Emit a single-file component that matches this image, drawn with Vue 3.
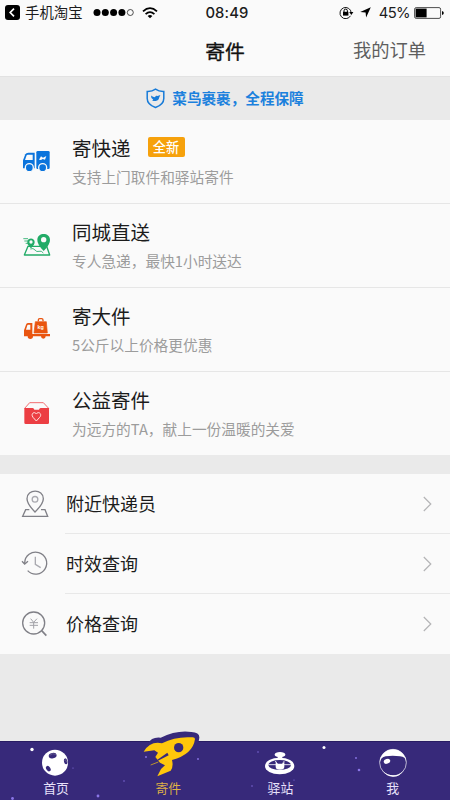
<script setup>
const services = [
  { id: 'truck', title: '寄快递', desc: '支持上门取件和驿站寄件', badge: '全新' },
  { id: 'city', title: '同城直送', desc: '专人急递，最快1小时送达' },
  { id: 'heavy', title: '寄大件', desc: '5公斤以上价格更优惠' },
  { id: 'charity', title: '公益寄件', desc: '为远方的TA，献上一份温暖的关爱' },
]
const tools = [
  { id: 'courier', title: '附近快递员' },
  { id: 'time', title: '时效查询' },
  { id: 'price', title: '价格查询' },
]
const tabs = [
  { id: 'home', label: '首页' },
  { id: 'send', label: '寄件', active: true },
  { id: 'station', label: '驿站' },
  { id: 'me', label: '我' },
]
</script>

<template>
  <div class="screen">
    <header>
      <div class="status">
        <div class="left">
          <svg class="back" width="15" height="15" viewBox="0 0 15 15"><rect width="15" height="15" rx="3" /><path d="M9 3.6 5.2 7.5 9 11.4" fill="none" stroke="#fff" stroke-width="1.7" /></svg>
          <span class="app">手机淘宝</span>
          <svg class="signal" width="42" height="9" viewBox="0 0 42 9"><circle cx="4" cy="4.5" r="3.5" /><circle cx="12.3" cy="4.5" r="3.5" /><circle cx="20.6" cy="4.5" r="3.5" /><circle cx="28.9" cy="4.5" r="3.5" /><circle cx="37.3" cy="4.5" r="3" fill="none" stroke="#222" stroke-width=".8" /></svg>
          <svg class="wifi" width="16" height="12" viewBox="0 0 16 12"><g fill="none" stroke="#000" stroke-width="1.8"><path d="M1 4.3Q8-2 15 4.3" /><path d="M3.6 7.1Q8 3.1 12.4 7.1" /></g><path d="M5.6 8.9Q8 6.9 10.4 8.9L8 11.3Z" /></svg>
        </div>
        <span class="clock">08:49</span>
        <div class="right">
          <svg width="15" height="13" viewBox="0 0 15 13"><path d="M11.5 9.8A5.6 5.6 0 1 1 12.2 6.8" fill="none" stroke="#111" stroke-width="1" /><path d="M10.2 6.1h4.2l-2.1 2.8Z" /><rect x="4" y="5.8" width="5.4" height="3.8" /><path d="M5 6V4.8a1.7 1.7 0 0 1 3.4 0V6" fill="none" stroke="#000" stroke-width="1" /></svg>
          <svg class="loc" width="11" height="11" viewBox="0 0 11 11"><path d="M10.8.2 6.1 10.6 5.6 5.5.2 5.1Z" /></svg>
          <span class="pct">45%</span>
          <svg class="battery" width="30" height="12" viewBox="0 0 30 12"><rect x=".6" y=".6" width="26" height="10.8" rx="1.6" fill="none" stroke="#222" stroke-width=".8" /><rect x="1.6" y="1.6" width="11" height="8.8" /><path d="M28 4q1.8.4 1.8 2T28 8Z" /></svg>
        </div>
      </div>
      <div class="nav"><h1>寄件</h1><a>我的订单</a></div>
    </header>

    <div class="promise">
      <svg width="19" height="21" viewBox="0 0 19 21"><path d="M9.5 1.2Q13 3.7 17.8 3.5V10.5Q17.8 16.5 9.5 19.5 1.2 16.5 1.2 10.5V3.5Q6 3.7 9.5 1.2Z" fill="none" stroke="#187bd8" stroke-width="1.5" /><path d="M5 7.4Q7 9.2 9 9.2 9.8 7.2 11.6 7.9L14.4 7.1 13.2 9.6Q12.6 12.8 9.8 13 8 13.2 6.2 12.4L7.2 11.6Q4.8 10.4 5 7.4Z" fill="#187bd8" /></svg>
      <span>菜鸟裹裹，全程保障</span>
    </div>

    <section class="services">
      <article v-for="s in services" :key="s.id">
        <svg v-if="s.id === 'truck'" class="sicon" viewBox="66 84 90 78">
          <path d="M85 98H104V145H69V121L76 103Q78 98 85 98Z" fill="#0b74dc" /><path d="M83 104H98V120H75L80 106Z" fill="#fafafa" />
          <rect x="109" y="93" width="40" height="54" rx="4" fill="#0b74dc" />
          <g fill="#0b74dc" stroke="#fafafa" stroke-width="4"><circle cx="88" cy="143" r="12" /><circle cx="128" cy="143" r="12" /></g>
          <path d="M117 119l6-10 6 4 10-5-4 11-7-2-5 3Z" fill="#fafafa" />
        </svg>
        <svg v-else-if="s.id === 'city'" class="sicon" viewBox="66 81 90 78">
          <g fill="none" stroke="#22ab67"><path d="M84 124 73 150H149L140 124H82" stroke-width="4" stroke-linejoin="round" /><path d="M91 132q9-4 14 3t12 4 13 5" stroke-width="2.5" /><path d="M70 101H84M73 108H84M77 115H87" stroke-width="2.5" /></g>
          <path d="M131 138Q111 117 112 104C112 81 150 81 150 104Q151 117 131 138Z" fill="#22ab67" /><circle cx="131" cy="104" r="8" fill="#fafafa" />
          <path d="M93 130Q80 118 82 110C83 97 104 97 104 111Q104 119 93 130Z" fill="#22ab67" /><circle cx="93" cy="111" r="5" fill="#fafafa" />
        </svg>
        <svg v-else-if="s.id === 'heavy'" class="sicon" viewBox="66 78 90 78">
          <path d="M84 99H97V132H150V139H137A7 7 0 0 1 123 139H99A8 8 0 0 1 83 139H72V121L78 104Q79 99 84 99Z" fill="#e95510" /><path d="M84 104H91V119H78L82 106Z" fill="#fafafa" />
          <path d="M106 95H139L142 129H102Z" fill="#e95510" stroke="#e95510" stroke-width="2" stroke-linejoin="round" /><path d="M115 94V90Q115 86 119 86H125Q129 86 129 90V94" fill="none" stroke="#e95510" stroke-width="4" />
          <text x="122" y="118" text-anchor="middle">kg</text>
        </svg>
        <svg v-else class="sicon" viewBox="66 90 90 78">
          <path d="M74 115 89 98H130L146 115" fill="none" stroke="#ee5254" stroke-width="2.5" />
          <path d="M73 114H98Q102 114 103 119H117Q118 114 122 114H147V158Q147 162 143 162H77Q73 162 73 158Z" fill="#ec3e43" />
          <path d="M109 153 99 142C91 132 103 122 109 132 115 122 128 132 119 142Z" fill="none" stroke="#ffe5e2" stroke-width="3" stroke-linejoin="round" />
        </svg>
        <div class="copy">
          <h2>{{ s.title }}<em v-if="s.badge">{{ s.badge }}</em></h2>
          <p>{{ s.desc }}</p>
        </div>
      </article>
    </section>

    <section class="tools">
      <div v-for="t in tools" :key="t.id" class="tool">
        <svg class="ticon" viewBox="0 0 84 84" fill="none" stroke="#808087" stroke-width="4">
          <template v-if="t.id === 'courier'"><path d="M42 66Q18 41 18 26C18-4 67-4 67 26Q67 41 42 66Z" /><circle cx="42" cy="28" r="8.5" stroke="#aaaab0" /><path d="M25 59H14L5 79H80L72 59H60" /></template>
          <template v-else-if="t.id === 'time'"><path d="M11 39A33 33 0 1 1 20 62" /><path d="M3 34 11 42 21 34" /><path d="M43 20V43L59 53" stroke="#aaaab0" /></template>
          <template v-else><circle cx="38" cy="39" r="33" /><path d="M62 62 76 77" stroke-width="5" /><path d="M29 26 38 37 48 26M38 37V56M26 38H51M26 46H51" stroke="#a2a2a8" stroke-width="3" /></template>
        </svg>
        <div class="line"><span>{{ t.title }}</span><svg width="9" height="16" viewBox="0 0 9 16" fill="none" stroke="#b4b4b6" stroke-width="1.2"><path d="M.8 1 7.8 8 .8 15" /></svg></div>
      </div>
    </section>

    <footer>
      <svg class="stars" viewBox="0 0 450 59">
        <g fill="#fff"><circle cx="32" cy="8.5" r="1.7" /><circle cx="324" cy="6.5" r="1.5" /></g>
        <g fill="#8b76e8"><circle cx="98" cy="55" r="1.4" /><circle cx="12.5" cy="57.5" r="1.4" /><circle cx="359" cy="29" r="1.3" /><circle cx="356" cy="17" r=".9" /><circle cx="198" cy="18" r=".9" /><circle cx="146" cy="16" r=".9" /><circle cx="124" cy="40" r=".7" /><circle cx="258" cy="11" r=".7" /><circle cx="252" cy="45" r=".7" /><circle cx="73" cy="27" r=".6" /><circle cx="294" cy="39" r=".6" /></g>
      </svg>
      <div v-for="t in tabs" :key="t.id" class="tab" :class="{ active: t.active }">
        <svg v-if="t.id === 'home'" class="gicon" viewBox="120 66 96 96">
          <circle cx="165" cy="113" r="39" fill="#fff" /><g fill="#37297a"><ellipse cx="158" cy="92" rx="12" ry="8" transform="rotate(-12 158 92)" /><ellipse cx="145" cy="131" rx="6" ry="9" transform="rotate(-35 145 131)" /><ellipse cx="197" cy="109" rx="5" ry="9" transform="rotate(-12 197 109)" /></g><path d="M149 91Q157 83 168 88M193 106Q197 100 200 112" fill="none" stroke="#777099" stroke-width="2" />
        </svg>
        <svg v-else-if="t.id === 'send'" class="gicon" viewBox="457 66 96 96">
          <path d="M445 56Q455 35 483 38 530 15 575 21 600 22 599 38 598 66 565 89L525 111V130L505 142 480 100 447 91Z" fill="#37297a" />
          <path d="M586 42Q586 37 579 37 528 33 487 55 452 47 432 80L464 76 475 83 467 96 481 113 496 121 484 132 473 154 513 137Q522 125 517 105 580 88 586 42Z" fill="#ffc70b" />
          <circle cx="537" cy="68" r="14" fill="#37297a" /><path d="M503 83 454 118 507 91Z" fill="#37297a" /><path d="M476 111 453 120" stroke="#ffc70b" stroke-width="2" />
        </svg>
        <svg v-else-if="t.id === 'station'" class="gicon" viewBox="119 66 96 96">
          <ellipse cx="167" cy="89" rx="16" ry="8" fill="#fff" /><path d="M160 95H174V101H160Z" fill="#fff" />
          <ellipse cx="166" cy="123" rx="44" ry="25" fill="#fff" /><ellipse cx="166" cy="120" rx="34" ry="15" fill="#37297a" />
          <path d="M132 119H157M177 119H200M152 108 158 113M180 108 176 113" stroke="#fff" stroke-width="2.5" /><path d="M154 110 161 116H173L180 110V125Q180 134 167 134 154 134 154 125Z" fill="#fff" />
        </svg>
        <svg v-else class="gicon" viewBox="455 66 96 96">
          <circle cx="503" cy="113" r="40" fill="none" stroke="#fff" stroke-width="2" /><path d="M463 113A40 40 0 0 1 543 113Q541 94 524 94 502 91 481 94 466 97 463 113Z" fill="#fff" />
          <path d="M473 138Q486 151 503 151 522 151 534 137 524 155 503 155 482 154 473 138Z" fill="#fff" /><ellipse cx="485" cy="109" rx="10" ry="7" transform="rotate(-18 485 109)" fill="#fff" />
        </svg>
        <span>{{ t.label }}</span>
      </div>
    </footer>
  </div>
</template>

<style>
body { margin: 0; background: #eaeaea; }
</style>
<style scoped>
.screen { width: 450px; height: 800px; display: flex; flex-direction: column; background: #eaeaea; overflow: hidden; font-family: "Noto Sans CJK SC", sans-serif; color: #1c1c1c; }
header { height: 76px; background: #fafafa; border-bottom: 1px solid #e2e2e2; flex: none; }
.status { height: 25px; display: grid; grid-template-columns: 1fr auto 1fr; align-items: center; }
.left, .right { display: flex; align-items: center; }
.left { padding-left: 5px; }
.app { font-size: 14.4px; line-height: 23px; margin-left: 5px; padding-bottom: 2px; }
.signal { margin-left: 10px; }
.wifi { margin-left: 7px; }
.clock { font: 500 14.8px "Inter", sans-serif; letter-spacing: .15px; margin-left: 4px; }
.right { justify-content: flex-end; padding-right: 6px; }
.loc { margin-left: 6px; }
.pct { font: 400 14.8px "Inter", sans-serif; letter-spacing: -.6px; margin: 0 4px 0 8px; }
.nav { height: 51px; display: grid; grid-template-columns: 1fr auto 1fr; align-items: center; }
.nav h1 { grid-column: 2; margin: 0; font-size: 19.8px; font-weight: 400; line-height: 49px; padding-bottom: 1px; color: #111; -webkit-text-stroke: .35px #111; }
.nav a { justify-self: end; margin-right: 24px; font-size: 18.3px; line-height: 49px; padding-bottom: 2px; color: #5e5e5e; font-weight: 400; }
.promise { height: 43px; flex: none; display: flex; align-items: center; justify-content: center; gap: 7px; color: #1c81dd; font-size: 14.6px; font-weight: 700; }
.promise span { line-height: 42px; padding-bottom: 1px; }
.services { height: 335px; flex: none; display: grid; grid-template-rows: 84px 84px 84px 83px; background: #fafafa; }
article { display: flex; box-sizing: border-box; padding-left: 22px; border-bottom: 1px solid #e6e6e6; }
article:last-child { border-bottom: 0; }
.sicon { width: 30px; height: 26px; margin-top: 28px; }
.sicon text { font: 700 17px "Roboto", sans-serif; fill: #fff0e5; }
.copy { margin-left: 20px; padding-top: 13px; }
h2 { margin: 0; display: flex; align-items: center; height: 30px; font-size: 19.5px; font-weight: 400; line-height: 30px; }
em { margin: 0 0 2px 17px; width: 37px; height: 20px; border-radius: 2px; background: #f6a10c; color: #fff; font-style: normal; font-size: 13.2px; font-weight: 500; line-height: 20px; text-align: center; }
p { margin: 4px 0 0; font-size: 14.7px; line-height: 20px; color: #9c9c9c; font-weight: 400; }
.tools { margin-top: 19px; height: 180px; flex: none; background: #fafafa; }
.tool { height: 60px; display: flex; align-items: center; padding-left: 21px; }
.ticon { width: 28px; height: 28px; margin-right: 16px; }
.line { flex: 1; height: 59px; border-bottom: 1px solid #e8e8e8; display: flex; align-items: center; justify-content: space-between; padding: 0 18px 0 1px; }
.tool:last-child .line { border-color: transparent; }
.line span { font-size: 18px; line-height: 59px; }
footer { position: relative; margin-top: auto; height: 59px; flex: none; display: grid; grid-template-columns: repeat(4, 112.2px); background: #37297a; box-shadow: inset 0 1px #291c63; }
.stars { position: absolute; inset: 0; width: 450px; height: 59px; }
.tab { position: relative; display: flex; flex-direction: column; align-items: center; padding-top: 6px; color: #e7e1fa; font-size: 12.9px; }
.tab span { line-height: 17px; }
.tab.active { color: #ddb047; }
.gicon { width: 32px; height: 32px; overflow: visible; }
</style>
